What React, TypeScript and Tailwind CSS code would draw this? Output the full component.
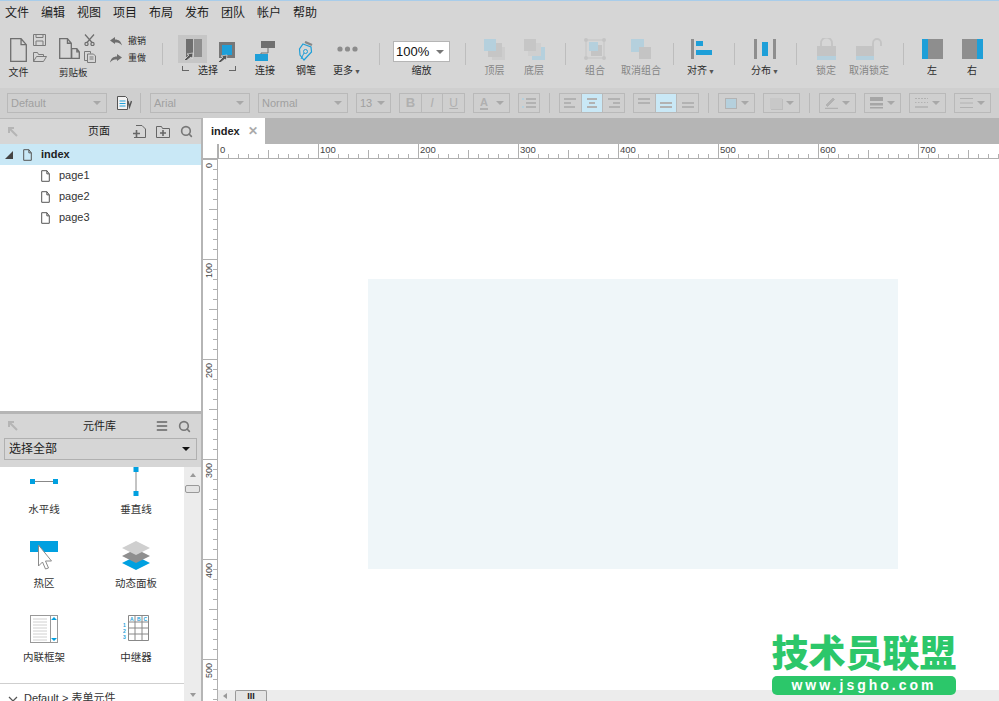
import type { ReactNode } from "react";
import { Search, Menu as MenuIcon } from "lucide-react";

const BLUE = "#1e9fd8";
const GRAY = "#8e8e8e";
const PALE = "#b5d0dd";
const DIS = "#c4c4c4";

const menus = ["文件", "编辑", "视图", "项目", "布局", "发布", "团队", "帐户", "帮助"];

function Sep({ className = "" }: { className?: string }) {
  return <div className={`mt-[9px] h-[22px] w-px shrink-0 bg-[#bdbdbd] ${className}`} />;
}

function Tool({
  className,
  label,
  muted,
  caret,
  children,
}: {
  className: string;
  label: string;
  muted?: boolean;
  caret?: boolean;
  children: ReactNode;
}) {
  return (
    <div className={`flex shrink-0 flex-col items-center ${className}`}>
      <div className="flex h-[30px] items-center justify-center">{children}</div>
      <div className={`mt-px h-3 whitespace-nowrap text-[10px] leading-3 ${muted ? "text-[#858585]" : "text-[#2b2b2b]"}`}>
        {label}
        {caret && <span className="ml-px text-[7px] text-[#555]">▼</span>}
      </div>
    </div>
  );
}

function PageIcon({ w = 17, h = 24, color = "#6e6e6e", sw = 1.3 }: { w?: number; h?: number; color?: string; sw?: number }) {
  const f = w * 0.35;
  return (
    <svg width={w} height={h} viewBox={`0 0 ${w} ${h}`} fill="none" stroke={color} strokeWidth={sw}>
      <path d={`M.7.7H${w - f}L${w - 0.7} ${f + 0.7}V${h - 0.7}H.7Z M${w - f} .7V${f + 0.7}H${w - 0.7}`} />
    </svg>
  );
}

function SelectA() {
  return (
    <div className="flex h-7 w-[29px] items-center justify-center bg-[#c6c6c6]">
      <svg width="20" height="22" viewBox="0 0 20 22">
        <rect x="3" y="1" width="7" height="18" fill="#6f6f6f" />
        <rect x="11" y="1" width="8" height="18" fill="#8f8f8f" />
        <path d="M1 22l5-5-2-1 6-1-1 6-1-2-5 4z" fill="#555" stroke="#eee" strokeWidth=".6" />
      </svg>
    </div>
  );
}

function SelectB() {
  return (
    <svg width="17" height="20" viewBox="0 0 17 20">
      <rect x="1" y="0" width="16" height="16" fill="#777" />
      <rect x="4" y="3" width="10" height="10" fill={BLUE} />
      <path d="M0 20l5-5-2-1 6-1-1 6-1-2-5 4z" fill="#555" stroke="#eee" strokeWidth=".6" />
    </svg>
  );
}

function FormatBox({ className, text, caret = true, children }: { className: string; text?: string; caret?: boolean; children?: ReactNode }) {
  return (
    <div className={`flex h-5 shrink-0 items-center justify-between border border-[#b9b9b9] px-[3px] text-[11px] text-[#a0a0a0] ${className}`}>
      {text && <span>{text}</span>}
      {children}
      {caret && <span className="mr-[2px] h-0 w-0 border-x-[4px] border-t-[4px] border-x-transparent border-t-[#a8a8a8]" />}
    </div>
  );
}

function Cells({ className, items }: { className: string; items: ReactNode[] }) {
  return (
    <div className={`flex h-5 w-[66px] shrink-0 divide-x divide-[#b9b9b9] border border-[#b9b9b9] ${className}`}>
      {items.map((it, i) => (
        <div key={i} className="flex flex-1 items-center justify-center">
          {it}
        </div>
      ))}
    </div>
  );
}

function Lines({ a, b, c, color = "#b2b2b2", bg }: { a: number[]; b: number[]; c: number[]; color?: string; bg?: boolean }) {
  return (
    <div className={`flex h-full w-full items-center justify-center ${bg ? "bg-[#c9e8f6]" : ""}`}>
      <svg width="12" height="10" viewBox="0 0 12 10" fill={color}>
        <rect x={a[0]} y="0" width={a[1]} height="2" />
        <rect x={b[0]} y="4" width={b[1]} height="2" />
        <rect x={c[0]} y="8" width={c[1]} height="2" />
      </svg>
    </div>
  );
}

function HRuler() {
  const ticks = Array.from({ length: 79 }, (_, i) => i * 10);
  return (
    <svg width="781" height="15" viewBox="0 0 781 15" className="block">
      <line x1="0" x2="781" y1="14.500" y2="14.500" stroke="#b0b0b0" />
      {ticks.map((t) => (
        <line
          key={t}
          x1={t + 0.5}
          x2={t + 0.5}
          y1={t % 100 === 0 ? 0 : t % 50 === 0 ? 6 : 10}
          y2="15"
          stroke="#b0b0b0"
        />
      ))}
      {ticks
        .filter((t) => t % 100 === 0)
        .map((t) => (
          <text key={t} x={t + 2} y="9" fontSize="9.500" fill="#444">
            {t}
          </text>
        ))}
    </svg>
  );
}

function VRuler() {
  const ticks = Array.from({ length: 55 }, (_, i) => i * 10);
  return (
    <svg width="14" height="542" viewBox="0 0 14 542" className="block">
      {ticks.map((t) => (
        <line
          key={t}
          y1={t + 0.5}
          y2={t + 0.5}
          x1={t % 100 === 0 ? 0 : t % 50 === 0 ? 6 : 10}
          x2="14"
          stroke="#b0b0b0"
        />
      ))}
      {ticks
        .filter((t) => t % 100 === 0)
        .map((t) => (
          <text
            key={t}
            fontSize="9"
            fill="#444"
            textAnchor="end"
            transform={`translate(9 ${t + 4}) rotate(-90)`}
          >
            {t}
          </text>
        ))}
    </svg>
  );
}

function Widget({ label, children }: { label: string; children: ReactNode }) {
  return (
    <div className="flex h-[74px] flex-col items-center">
      <div className="flex h-[30px] items-start justify-center">{children}</div>
      <div className="mt-1 h-4 whitespace-nowrap text-[10.5px] leading-4 text-[#333]">{label}</div>
    </div>
  );
}

export default function App() {
  return (
    <div className="flex h-[701px] w-[999px] flex-col overflow-hidden bg-white font-['Liberation_Sans','Noto_Sans_CJK_SC',sans-serif] relative">
      {/* menu */}
      <div className="h-[25px] shrink-0 border-t border-[#a9cdea] bg-[#d6d6d6]">
        <div className="flex gap-3 pl-[5px] pt-[4px] text-[12px] leading-4 text-[#1c1c1c]">
          {menus.map((m) => (
            <span key={m} className="w-6">
              {m}
            </span>
          ))}
        </div>
      </div>

      {/* toolbar */}
      <div className="flex h-[63px] shrink-0 items-start bg-[#d6d6d6] pt-[9px]">
        <div className="ml-[9px] flex w-[19px] shrink-0 flex-col items-center">
          <div className="mt-1">
            <PageIcon />
          </div>
          <div className="mt-[5px] whitespace-nowrap text-[10px] leading-3 text-[#2b2b2b]">文件</div>
        </div>
        <div className="ml-[5px] flex w-[15px] shrink-0 flex-col gap-[6px]">
          <svg width="13" height="12" viewBox="0 0 13 12" fill="none" stroke="#7a7a7a">
            <path d="M.5.5h12v11H.5zM3 .5v3h7v-3M3 11.5V7h7v4.5" />
          </svg>
          <svg width="14" height="10" viewBox="0 0 14 10" fill="none" stroke="#7a7a7a">
            <path d="M.5 9.5V.5h4l1 2h5v2M.5 9.5l3-5h10l-3 5z" />
          </svg>
        </div>
        <div className="ml-[11px] flex w-[25px] shrink-0 flex-col items-start">
          <div className="mt-1 flex items-end">
            <PageIcon w={13} h={21} />
            <div className="-ml-px">
              <PageIcon w={9} h={11} />
            </div>
          </div>
          <div className="mt-2 whitespace-nowrap text-[9.5px] leading-3 text-[#2b2b2b]">剪贴板</div>
        </div>
        <div className="flex w-[12px] shrink-0 flex-col gap-[5px]">
          <svg width="11" height="12" viewBox="0 0 11 12" fill="none" stroke="#6e6e6e" strokeWidth="1.2">
            <path d="M1 .5l7 8M10 .5l-7 8" />
            <circle cx="2.5" cy="10" r="1.6" />
            <circle cx="8.5" cy="10" r="1.6" />
          </svg>
          <svg width="12" height="12" viewBox="0 0 12 12" fill="none" stroke="#7a7a7a">
            <path d="M.5.5h6v2M.5.5v9h3M3.5 3h6l2 2v6.500h-8zM5.500 6h4M5.500 8h4" />
          </svg>
        </div>
        <div className="ml-[14px] flex w-[36px] shrink-0 flex-col gap-[5px] pt-px text-[9px] leading-3 text-[#2b2b2b]">
          <div className="flex items-center justify-between">
            <svg width="12" height="9" viewBox="0 0 12 9" fill="#6e6e6e">
              <path d="M0 3.500L5 0v2.500c4 0 6 2 7 6-2-2.500-4-3-7-3V7z" />
            </svg>
            <span className="whitespace-nowrap">撤销</span>
          </div>
          <div className="flex items-center justify-between">
            <svg width="12" height="9" viewBox="0 0 12 9" fill="#6e6e6e">
              <path d="M12 3.500L7 0v2.500c-4 0-6 2-7 6 2-2.500 4-3 7-3V7z" />
            </svg>
            <span className="whitespace-nowrap">重做</span>
          </div>
        </div>
        <Sep className="ml-4" />

        <div className="ml-[15px] flex w-[63px] shrink-0 flex-col">
          <div className="flex h-[30px] items-start gap-[11px] pt-px">
            <SelectA />
            <div className="mt-[7px]">
              <SelectB />
            </div>
          </div>
          <div className="relative mt-px flex h-3 items-center justify-center pr-[3px] text-[10px] leading-3 text-[#2b2b2b]">
            <span>选择</span>
            <span className="absolute left-[4px] top-[1px] h-[5px] w-[7px] border-b border-l border-[#666]" />
            <span className="absolute left-[51px] top-[1px] h-[5px] w-[7px] border-b border-r border-[#666]" />
          </div>
        </div>
        <Tool className="ml-1 w-10" label="连接">
          <svg width="20" height="20" viewBox="0 0 20 20" className="mt-[3px]">
            <rect x="6" y="0" width="14" height="7" fill="#707070" />
            <path d="M13 7v5H6v2" fill="none" stroke="#707070" />
            <rect x="0" y="13" width="13" height="7" fill={BLUE} />
          </svg>
        </Tool>
        <Tool className="ml-px w-10" label="钢笔">
          <svg width="16" height="20" viewBox="0 0 16 20" fill="none" className="mt-[3px]">
            <path d="M7 1l7 3" stroke="#888" strokeWidth="2.4" />
            <path d="M5 3l8 3 .5 5L6 19 2 14 1.500 8z" stroke={BLUE} strokeWidth="1.2" />
            <circle cx="7.500" cy="10.500" r="2" stroke={BLUE} />
            <path d="M6 12l-3 6" stroke={BLUE} />
          </svg>
        </Tool>
        <Tool className="ml-px w-10" label="更多" caret>
          <svg width="21" height="6" viewBox="0 0 21 6" fill="#8c8c8c">
            <circle cx="3" cy="3" r="2.600" />
            <circle cx="10.500" cy="3" r="2.600" />
            <circle cx="18" cy="3" r="2.600" />
          </svg>
        </Tool>
        <Sep className="ml-3" />
        <div className="ml-[13px] flex w-[57px] shrink-0 flex-col items-center">
          <div className="mt-[7px] flex h-[21px] w-full items-center justify-between border border-[#b5b5b5] bg-white pl-[2px] pr-[5px] text-[13px] text-[#111]">
            <span>100%</span>
            <span className="h-0 w-0 border-x-[4px] border-t-[4px] border-x-transparent border-t-[#777]" />
          </div>
          <div className="mt-[3px] h-3 text-[10px] leading-3 text-[#2b2b2b]">缩放</div>
        </div>
        <Sep className="ml-[15px]" />
        <Tool className="ml-[9px] w-[39px]" label="顶层" muted>
          <svg width="21" height="21" viewBox="0 0 21 21" className="mt-px">
            <rect x="8" y="8" width="13" height="13" fill="#cdcdcd" />
            <rect x="4" y="4" width="14" height="14" fill="#c6c6c6" />
            <rect x="0" y="0" width="12" height="12" fill={PALE} />
          </svg>
        </Tool>
        <Tool className="w-10" label="底层" muted>
          <svg width="21" height="21" viewBox="0 0 21 21" className="mt-px">
            <rect x="8" y="8" width="13" height="13" fill={PALE} />
            <rect x="4" y="4" width="13" height="13" fill="#cfcfcf" />
            <rect x="0" y="0" width="12" height="12" fill="#c6c6c6" />
          </svg>
        </Tool>
        <Sep className="ml-[11px]" />
        <Tool className="ml-[9px] w-10" label="组合" muted>
          <svg width="22" height="22" viewBox="0 0 22 22">
            <rect x="2" y="2" width="18" height="18" fill="none" stroke={DIS} />
            <g fill={DIS}>
              <circle cx="2" cy="2" r="2" />
              <circle cx="20" cy="2" r="2" />
              <circle cx="2" cy="20" r="2" />
              <circle cx="20" cy="20" r="2" />
              <rect x="7" y="7" width="11" height="11" />
            </g>
            <rect x="5" y="4" width="9" height="9" fill={PALE} />
          </svg>
        </Tool>
        <Tool className="ml-px w-[50px]" label="取消组合" muted>
          <svg width="22" height="22" viewBox="0 0 22 22">
            <rect x="1" y="1" width="13" height="13" fill={PALE} />
            <rect x="9" y="9" width="12" height="12" fill={DIS} />
          </svg>
        </Tool>
        <Sep className="ml-[7px]" />
        <Tool className="ml-[7px] w-10" label="对齐" caret>
          <svg width="21" height="20" viewBox="0 0 21 20">
            <rect x="0" y="0" width="3" height="20" fill={GRAY} />
            <rect x="5" y="2" width="7" height="5" fill={BLUE} />
            <rect x="5" y="11" width="16" height="5" fill={BLUE} />
          </svg>
        </Tool>
        <Sep className="ml-[13px]" />
        <Tool className="ml-[10px] w-10" label="分布" caret>
          <svg width="22" height="20" viewBox="0 0 22 20">
            <rect x="0" y="0" width="3" height="20" fill={GRAY} />
            <rect x="8" y="3" width="6" height="14" fill={BLUE} />
            <rect x="19" y="0" width="3" height="20" fill={GRAY} />
          </svg>
        </Tool>
        <Sep className="ml-[11px]" />
        <Tool className="ml-[9px] w-10" label="锁定" muted>
          <svg width="19" height="22" viewBox="0 0 19 22">
            <path d="M4 8V5a5.500 5.500 0 0 1 11 0v3" fill="none" stroke={DIS} strokeWidth="1.800" />
            <rect x="0" y="8" width="19" height="10" fill={DIS} />
            <rect x="0" y="18" width="19" height="4" fill={PALE} />
          </svg>
        </Tool>
        <Tool className="ml-px w-11" label="取消锁定" muted>
          <svg width="26" height="22" viewBox="0 0 26 22">
            <path d="M17 8V5a4 4 0 0 1 8 0v3" fill="none" stroke={DIS} strokeWidth="1.800" />
            <rect x="0" y="8" width="18" height="10" fill={DIS} />
            <rect x="0" y="18" width="18" height="4" fill={PALE} />
          </svg>
        </Tool>
        <Sep className="ml-3" />
        <Tool className="ml-[8px] w-10" label="左">
          <svg width="21" height="20" viewBox="0 0 21 20">
            <rect x="0" y="0" width="6" height="20" fill={BLUE} />
            <rect x="6" y="0" width="15" height="20" fill={GRAY} />
          </svg>
        </Tool>
        <Tool className="w-10" label="右">
          <svg width="21" height="20" viewBox="0 0 21 20">
            <rect x="0" y="0" width="15" height="20" fill={GRAY} />
            <rect x="15" y="0" width="6" height="20" fill={BLUE} />
          </svg>
        </Tool>
      </div>

      {/* format bar */}
      <div className="flex h-[30px] shrink-0 items-center bg-[#cfcfcf]">
        <FormatBox className="ml-[7px] w-[100px]" text="Default" />
        <svg width="15" height="14" viewBox="0 0 15 14" className="ml-[10px] shrink-0" fill="none">
          <path d="M.5.500h8l2 2v11h-10z" fill="#f2f2f2" stroke="#555" />
          <path d="M2.500 5h6M2.500 7.500h6M2.500 10h6" stroke={BLUE} />
          <path d="M11 5l1.500 6 2-6" stroke="#555" strokeWidth="1.400" />
        </svg>
        <div className="ml-[8px] h-5 w-px shrink-0 bg-[#b9b9b9]" />
        <FormatBox className="ml-[9px] w-[100px]" text="Arial" />
        <FormatBox className="ml-2 w-[90px]" text="Normal" />
        <FormatBox className="ml-2 w-[35px]" text="13" />
        <Cells
          className="ml-2"
          items={[
            <span key="b" className="text-[13px] font-bold text-[#b0b0b0]">B</span>,
            <span key="i" className="text-[13px] italic text-[#b0b0b0]">I</span>,
            <span key="u" className="text-[12px] text-[#b0b0b0] underline">U</span>,
          ]}
        />
        <FormatBox className="ml-2 w-[37px]">
          <span className="ml-[3px] border-b-2 border-[#b0b0b0] text-[11px] font-bold leading-[12px] text-[#b0b0b0]">A</span>
        </FormatBox>
        <div className="ml-2 flex h-5 w-[22px] shrink-0 items-center justify-center border border-[#b9b9b9]">
          <svg width="14" height="10" viewBox="0 0 14 10" fill="#b2b2b2">
            <rect x="4" y="0" width="10" height="2" />
            <rect x="4" y="4" width="10" height="2" />
            <rect x="4" y="8" width="10" height="2" />
            <rect x="0" y="0" width="2" height="2" fill={PALE} />
            <rect x="0" y="8" width="2" height="2" fill={PALE} />
          </svg>
        </div>
        <div className="ml-[9px] h-5 w-px shrink-0 bg-[#b9b9b9]" />
        <Cells
          className="ml-[9px]"
          items={[
            <Lines key="l" a={[0, 12]} b={[0, 7]} c={[0, 11]} />,
            <Lines key="c" a={[1, 10]} b={[3, 6]} c={[1, 10]} bg />,
            <Lines key="r" a={[0, 12]} b={[5, 7]} c={[1, 11]} />,
          ]}
        />
        <Cells
          className="ml-2"
          items={[
            <Lines key="t" a={[0, 12]} b={[0, 12]} c={[0, 0]} />,
            <Lines key="m" a={[0, 0]} b={[0, 12]} c={[0, 12]} bg />,
            <Lines key="b" a={[0, 0]} b={[0, 12]} c={[0, 12]} />,
          ]}
        />
        <div className="ml-[9px] h-5 w-px shrink-0 bg-[#b9b9b9]" />
        <FormatBox className="ml-[9px] w-[37px]">
          <span className="ml-[3px] h-[11px] w-[12px] border border-[#b3b3b3] bg-[#b5d0dd]" />
        </FormatBox>
        <FormatBox className="ml-2 w-[37px]">
          <span className="ml-[3px] h-[11px] w-[12px] bg-[#c8c8c8] shadow-[1px_1px_0_#bdbdbd]" />
        </FormatBox>
        <div className="ml-[9px] h-5 w-px shrink-0 bg-[#b9b9b9]" />
        <FormatBox className="ml-[9px] w-[37px]">
          <svg width="13" height="12" viewBox="0 0 13 12" className="ml-[2px]" fill="none" stroke="#b2b2b2">
            <path d="M1 8l7-7 1.500 1.500-7 7z" fill="#b2b2b2" />
            <path d="M0 11.500h13" strokeWidth="1.500" />
          </svg>
        </FormatBox>
        <FormatBox className="ml-2 w-[37px]">
          <svg width="13" height="12" viewBox="0 0 13 12" className="ml-[2px]" fill="#a6a6a6">
            <rect y="0" width="13" height="4" />
            <rect y="6" width="13" height="2.500" />
            <rect y="10" width="13" height="1.500" />
          </svg>
        </FormatBox>
        <FormatBox className="ml-2 w-[37px]">
          <svg width="13" height="12" viewBox="0 0 13 12" className="ml-[2px]" stroke="#b2b2b2" fill="none">
            <path d="M0 1.500h13" strokeDasharray="2 1" />
            <path d="M0 5.500h13" strokeDasharray="1.500 1.500" />
            <path d="M0 10h13" strokeWidth="1.500" />
          </svg>
        </FormatBox>
        <FormatBox className="ml-2 w-[37px]">
          <svg width="13" height="12" viewBox="0 0 13 12" className="ml-[2px]" stroke="#b2b2b2" fill="none">
            <path d="M0 1.500h13M0 6h13M0 10.500h13" />
          </svg>
        </FormatBox>
      </div>

      {/* main */}
      <div className="flex min-h-0 flex-1">
        {/* left panels */}
        <div className="flex w-[201px] shrink-0 flex-col">
          <div className="h-[293px] shrink-0">
            <div className="flex h-[26px] items-center border-t border-[#b9b9b9] bg-[#d6d6d6] pl-2">
              <svg width="10" height="10" viewBox="0 0 10 10" fill="none" stroke="#b5b5b5" strokeWidth="2" className="shrink-0">
                <path d="M1 6V1h5M1 1l8 8" />
              </svg>
              <span className="ml-[70px] shrink-0 whitespace-nowrap text-[11px] text-[#222]">页面</span>
              <svg width="13" height="13" viewBox="0 0 13 13" className="ml-[23px] shrink-0" fill="none" stroke="#666">
                <path d="M3 .5h6l3.500 3.500v8.500H1" />
                <path d="M0 8.500h7M3.500 5v7" strokeWidth="1.600" />
              </svg>
              <svg width="14" height="12" viewBox="0 0 14 12" className="ml-[10px] shrink-0" fill="none" stroke="#666">
                <path d="M.5 11.500V.5h5l1 2h7v9z" />
                <path d="M4 7h6M7 4v6" strokeWidth="1.600" />
              </svg>
              <Search size={13} strokeWidth={3} color="#777" className="ml-[10px] shrink-0" />
            </div>
            <div className="flex h-[21px] items-center bg-[#c9e8f6] pl-[5px]">
              <span className="h-0 w-0 border-b-[8px] border-l-[8px] border-b-[#444] border-l-transparent" />
              <span className="ml-[10px] flex">
                <PageIcon w={9} h={12} color="#555" sw={1} />
              </span>
              <span className="ml-[9px] text-[11px] font-bold text-[#222]">index</span>
            </div>
            {["page1", "page2", "page3"].map((p) => (
              <div key={p} className="flex h-[21px] items-center pl-[41px]">
                <PageIcon w={9} h={12} color="#555" sw={1} />
                <span className="ml-[9px] text-[11px] text-[#333]">{p}</span>
              </div>
            ))}
          </div>

          <div className="h-[3px] shrink-0 bg-[#b5b5b5]" />
          <div className="h-[53px] shrink-0 bg-[#d6d6d6]">
            <div className="flex h-[24px] items-center pl-2">
              <svg width="10" height="10" viewBox="0 0 10 10" fill="none" stroke="#b5b5b5" strokeWidth="2" className="shrink-0">
                <path d="M1 6V1h5M1 1l8 8" />
              </svg>
              <span className="ml-[65px] shrink-0 whitespace-nowrap text-[11px] text-[#222]">元件库</span>
              <MenuIcon size={14} strokeWidth={2.5} color="#666" className="ml-[39px] shrink-0" />
              <Search size={13} strokeWidth={3} color="#777" className="ml-[9px] shrink-0" />
            </div>
            <div className="mx-1 flex h-[22px] items-center justify-between border border-[#b0b0b0] pl-1 pr-[6px] text-[12px] text-[#1c1c1c]">
              <span>选择全部</span>
              <span className="h-0 w-0 border-x-[4px] border-t-[4px] border-x-transparent border-t-[#111]" />
            </div>
          </div>
          <div className="flex min-h-0 flex-1">
            <div className="flex w-[184px] shrink-0 flex-col overflow-hidden">
              <div className="-ml-[2px] grid h-[216px] shrink-0 grid-cols-[92px_92px]">
                <Widget label="水平线">
                  <svg width="28" height="28" viewBox="0 0 28 28">
                    <path d="M4 14.500h22" stroke="#888" />
                    <rect x="0" y="12" width="5" height="5" fill="#00a0e0" />
                    <rect x="23" y="12" width="5" height="5" fill="#00a0e0" />
                  </svg>
                </Widget>
                <Widget label="垂直线">
                  <svg width="6" height="30" viewBox="0 0 6 30">
                    <path d="M3 2v24" stroke="#888" />
                    <rect x="0.500" y="0" width="5" height="5" fill="#00a0e0" />
                    <rect x="0.500" y="24" width="5" height="5" fill="#00a0e0" />
                  </svg>
                </Widget>
                <Widget label="热区">
                  <svg width="28" height="29" viewBox="0 0 28 29">
                    <rect x="0" y="0" width="28" height="11" fill="#00a0e0" />
                    <path d="M8.500 4v21l4-4 3 7 3-1-3-7h6z" fill="#fff" stroke="#8a8a8a" />
                  </svg>
                </Widget>
                <Widget label="动态面板">
                  <svg width="28" height="29" viewBox="0 0 28 29">
                    <path d="M14 15l14 7-14 7-14-7z" fill="#00a0e0" />
                    <path d="M14 8l14 7-14 7-14-7z" fill="#8f8f8f" />
                    <path d="M14 0l14 7-14 7-14-7z" fill="#cfcfcf" />
                  </svg>
                </Widget>
                <Widget label="内联框架">
                  <svg width="28" height="28" viewBox="0 0 28 28" fill="none">
                    <rect x=".5" y=".5" width="27" height="27" stroke="#999" />
                    <path d="M20.500 .5v27" stroke="#999" />
                    <path d="M3 4h14M3 7h14M3 10h14M3 13h14M3 16h14M3 19h14M3 22h14M3 25h14" stroke="#d0d0d0" />
                    <path d="M24 2l3 3h-6z M21 23h6l-3 3z" fill="#00a0e0" />
                  </svg>
                </Widget>
                <Widget label="中继器">
                  <svg width="26" height="26" viewBox="0 0 26 26" fill="none">
                    <path d="M5.500.5h20v25h-20zM12 .5v25M19 .5v25M5.500 7h20M5.500 13h20M5.500 19h20" stroke="#888" />
                    <g fill="#1e9fd8" fontSize="5" fontWeight="700">
                      <text x="7" y="6">A</text>
                      <text x="14" y="6">B</text>
                      <text x="20.500" y="6">C</text>
                      <text x="0" y="12">1</text>
                      <text x="0" y="18">2</text>
                      <text x="0" y="24">3</text>
                    </g>
                  </svg>
                </Widget>
              </div>
              <div className="flex h-[18px] shrink-0 items-start gap-[6px] border-t border-[#cfcfcf] pl-2 pt-[8px] text-[11px] leading-[13px] text-[#333]">
                <svg width="10" height="6" viewBox="0 0 10 6" className="mt-1" fill="none" stroke="#555" strokeWidth="1.200">
                  <path d="M1 1l4 4 4-4" />
                </svg>
                <span>Default &gt; 表单元件</span>
              </div>
            </div>
            <div className="flex flex-1 flex-col items-center justify-between bg-[#ececec] pb-1 pt-[6px]">
              <div className="flex flex-col items-center">
                <span className="h-0 w-0 border-x-[3px] border-b-[4px] border-x-transparent border-b-[#999]" />
                <span className="mt-2 h-2 w-[15px] rounded-[2px] border border-[#999] bg-[#e4e4e4]" />
              </div>
              <span className="h-0 w-0 border-x-[3px] border-t-[4px] border-x-transparent border-t-[#999]" />
            </div>
          </div>
        </div>

        <div className="w-[2px] shrink-0 bg-[#b5b5b5]" />

        {/* editor */}
        <div className="flex min-w-0 flex-1 flex-col">
          <div className="flex h-[26px] shrink-0 bg-[#b5b5b5]">
            <div className="flex w-[62px] items-center bg-white pl-2 text-[11px] font-bold text-[#222]">
              index
              <span className="ml-2 text-[12px] leading-none text-[#aaa]">✕</span>
            </div>
          </div>
          <div className="flex h-[15px] shrink-0">
            <div className="w-[15px] shrink-0 border-b border-r border-[#b0b0b0]" />
            <div className="min-w-0 flex-1 overflow-hidden">
              <HRuler />
            </div>
          </div>
          <div className="flex min-h-0 flex-1">
            <div className="w-[15px] shrink-0 overflow-hidden border-r border-[#b0b0b0]">
              <VRuler />
            </div>
            <div className="flex min-w-0 flex-1 flex-col">
              <div className="min-h-0 flex-1 overflow-hidden pl-[150px] pt-[120px]">
                <div className="h-[290px] w-[530px] bg-[#eff6f9]" />
              </div>
              <div className="flex h-[11px] shrink-0 items-start bg-[#ececec] pl-[5px]">
                <span className="mt-[3px] h-0 w-0 border-y-[3px] border-r-[4px] border-y-transparent border-r-[#999]" />
                <span className="ml-[8px] flex h-[11px] w-8 items-center justify-center rounded-t-[2px] border border-b-0 border-[#999] bg-[#e4e4e4] text-[9px] font-bold leading-none text-[#222]">
                  III
                </span>
              </div>
            </div>
          </div>
        </div>
      </div>

      {/* watermark */}
      <div className="absolute left-[772px] top-[634px] flex w-[184px] flex-col items-center">
        <div className="whitespace-nowrap text-[37px] font-black leading-[41px] text-[#2cc76a]">技术员联盟</div>
        <div className="mt-px flex h-[19px] w-full items-center justify-center rounded-[5px] bg-[#2cc76a] text-[14px] font-bold tracking-[3px] text-white">
          www.jsgho.com
        </div>
      </div>
    </div>
  );
}
